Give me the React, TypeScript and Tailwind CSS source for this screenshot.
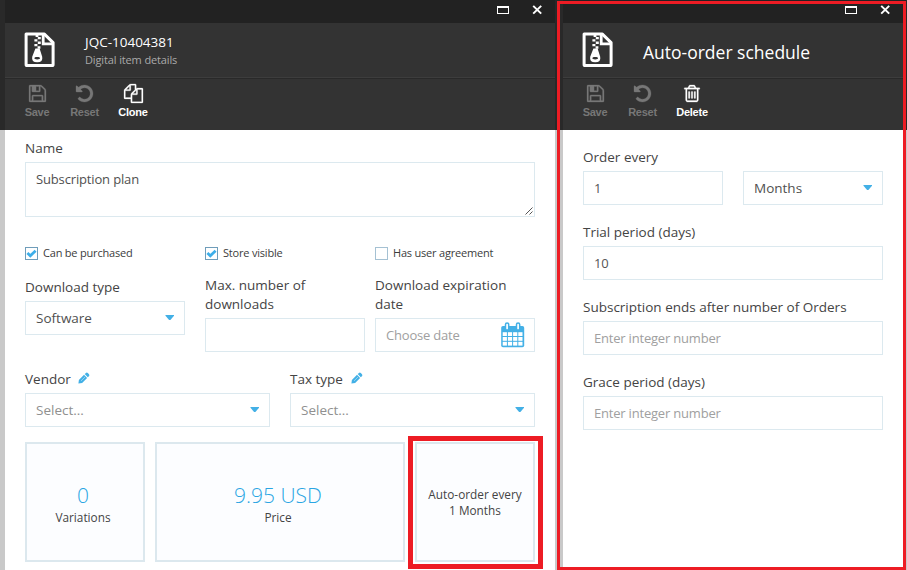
import type { ReactNode } from "react";

function ArchiveIcon() {
  return (
    <svg width="32" height="36" viewBox="0 0 32 36" className="-mt-px shrink-0">
      <path d="M2.1 2.1H20.4L29.1 10.6V32.4Q29.1 33.5 28 33.5H3.1Q2.1 33.5 2.1 32.4Z" fill="none" stroke="#fff" strokeWidth="3" strokeLinejoin="round" />
      <path d="M19.2 2V11.8H29" fill="none" stroke="#fff" strokeWidth="2.8" />
      <path d="M11.6 2.5h2.8v2.6h-2.8zM13.8 5h3v2.2h-3zM10.4 7.2h3v2.2h-3zM13.8 9.5h3v2.4h-3zM10.4 12h3v2.2h-3zM13.6 14.2h2.8v2.6h-2.8z" fill="#fff" />
      <path fillRule="evenodd" d="M11.4 16.5h4.2l2.6 8.2q1 5.6-5 5.6t-5-5.6ZM13.2 25c-1.9 0-2.8.6-2.8 1.2s.9 1.2 2.8 1.2 2.8-.6 2.8-1.2-.9-1.2-2.8-1.2Z" fill="#fff" />
    </svg>
  );
}

const glyphs = {
  save: {
    box: "0 128 1536 1536",
    size: "h-[17px] w-[17px]",
    d: "M384 1536h768v-384h-768v384zM1280 1536h128v-896q0-14-10-38.5t-20-34.5l-281-281q-10-10-34-20t-39-10v416q0 40-28 68t-68 28h-576q-40 0-68-28t-28-68v-416h-128v1280h128v-416q0-40 28-68t68-28h832q40 0 68 28t28 68v416zM896 608v-320q0-13-9.5-22.5t-22.5-9.5h-192q-13 0-22.5 9.5t-9.5 22.5v320q0 13 9.5 22.5t22.5 9.5h192q13 0 22.5-9.5t9.5-22.5zM1536 640v928q0 40-28 68t-68 28h-1344q-40 0-68-28t-28-68v-1344q0-40 28-68t68-28h928q40 0 88 20t76 48l280 280q28 28 48 76t20 88z",
  },
  reset: {
    box: "0 128 1536 1536",
    size: "h-[17px] w-[17px]",
    d: "M1536 896q0 156-61 298t-164 245-245 164-298 61q-172 0-327-72.5t-264-204.5q-7-10-6.5-22.5t8.5-20.5l137-138q10-9 25-9 16 2 23 12 73 95 179 147t225 52q104 0 198.5-40.5t163.5-109.5 109.5-163.5 40.5-198.5-40.5-198.5-109.5-163.5-163.5-109.5-198.5-40.5q-98 0-188 35.5t-160 101.5l137 138q31 30 14 69-17 40-59 40h-448q-26 0-45-19t-19-45v-448q0-42 40-59 39-17 69 14l130 129q107-101 244.5-156.5t284.5-55.5q156 0 298 61t245 164 164 245 61 298z",
  },
  clone: {
    box: "0 0 1792 1792",
    size: "h-[19px] w-[19px]",
    d: "M1696 384q40 0 68 28t28 68v1216q0 40-28 68t-68 28h-960q-40 0-68-28t-28-68v-288h-544q-40 0-68-28t-28-68v-672q0-40 20-88t48-76l408-408q28-28 76-48t88-20h416q40 0 68 28t28 68v328q68-40 128-40h416zm-544 213l-299 299h299v-299zm-640-384l-299 299h299v-299zm196 647l316-316v-416h-384v416q0 40-28 68t-68 28h-416v640h512v-256q0-40 20-88t48-76zm956 804v-1152h-384v416q0 40-28 68t-68 28h-416v640h896z",
  },
  trash: {
    box: "192 128 1408 1536",
    size: "h-[17px] w-[16px]",
    d: "M704 736v576q0 14-9 23t-23 9h-64q-14 0-23-9t-9-23v-576q0-14 9-23t23-9h64q14 0 23 9t9 23zm256 0v576q0 14-9 23t-23 9h-64q-14 0-23-9t-9-23v-576q0-14 9-23t23-9h64q14 0 23 9t9 23zm256 0v576q0 14-9 23t-23 9h-64q-14 0-23-9t-9-23v-576q0-14 9-23t23-9h64q14 0 23 9t9 23zm128 724v-948h-896v948q0 22 7 40.5t14.5 27 10.5 8.5h832q3 0 10.5-8.5t14.5-27 7-40.5zm-672-1076h448l-48-117q-7-9-17-11h-317q-10 2-17 11zm928 32v64q0 14-9 23t-23 9h-96v948q0 83-47 143.5t-113 60.5h-832q-66 0-113-58.5t-47-141.5v-952h-96q-14 0-23-9t-9-23v-64q0-14 9-23t23-9h309l70-167q15-37 54-63t79-26h320q40 0 79 26t54 63l70 167h309q14 0 23 9t9 23z",
  },
};

function Tool({ icon, label, active = false, width }: { icon: keyof typeof glyphs; label: string; active?: boolean; width: string }) {
  const g = glyphs[icon];
  return (
    <div className={`flex flex-col items-center ${width} ${active ? "text-white" : "text-[#777]"}`}>
      <div className="flex h-5 items-center justify-center">
        <svg viewBox={g.box} className={`overflow-visible ${g.size}`} fill="currentColor" stroke="currentColor" strokeWidth="25">
          <path d={g.d} />
        </svg>
      </div>
      <span className="mt-0.5 font-['Liberation_Sans',Arial,sans-serif] text-[11px] leading-[14px] font-bold tracking-[-0.25px]">{label}</span>
    </div>
  );
}

function TitleBar() {
  return (
    <div className="flex h-[23px] items-start justify-end gap-[23px] pt-[5px]">
      <div className="mt-px h-2 w-3 border border-t-2 border-white" />
      <svg width="10" height="10" viewBox="0 0 10 10">
        <path d="M1.2 0.9L9.2 8.6M9.2 0.9L1.2 8.6" stroke="#fff" strokeWidth="2" />
      </svg>
    </div>
  );
}

function Label({ children }: { children: ReactNode }) {
  return <div className="text-[13.5px] leading-[19px] text-[#444]">{children}</div>;
}

function Field({ value, hint }: { value?: string; hint?: string }) {
  return (
    <div className="flex h-[34px] items-center border border-[#dce9ef] pt-0.5 pl-2.5 text-[13px] tracking-[-0.2px]">
      {value ? <span className="text-[#555]">{value}</span> : <span className="text-[#a0a0a0]">{hint}</span>}
    </div>
  );
}

function Select({ value, hint }: { value?: string; hint?: string }) {
  return (
    <div className="flex h-[34px] items-center justify-between border border-[#dce9ef] pr-2.5 pl-2.5 text-[13.5px]">
      <span className={value ? "text-[#505050]" : "text-[#909090]"}>{value ?? hint}</span>
      <svg width="9" height="5" viewBox="0 0 9 5" className="-mt-px">
        <path d="M.5 0h8.5v.8L5.4 5H4.1L.5 .8z" fill="#43b0e6" />
      </svg>
    </div>
  );
}

function Check({ label, on = false }: { label: string; on?: boolean }) {
  return (
    <div className="flex items-start gap-[5px]">
      <div className={`flex size-[13px] items-center justify-center border ${on ? "border-[#6f9dba]" : "border-[#a5c1d3]"}`}>
        {on && (
          <svg width="11" height="11" viewBox="0 0 11 11">
            <path d="M1.4 4.9L4.3 7.7L9.6 2.8" fill="none" stroke="#3daee9" strokeWidth="2.8" />
          </svg>
        )}
      </div>
      <span className="-mt-px text-[11px] leading-[14px] tracking-[-0.2px] whitespace-nowrap text-[#3c3c3c]">{label}</span>
    </div>
  );
}

function Pencil() {
  return (
    <svg width="12" height="12" viewBox="0 0 12 12" className="mb-[3px]">
      <path d="M.4 11.6L.9 7.9L6 2.8L9.1 5.9L4.1 11ZM6.7 2.1L8 .9Q8.9.2 9.8 1L11 2.2Q11.7 3.1 11.1 4L9.8 5.2Z" fill="#43b0e6" />
      <path d="M3 8.9L7 5" stroke="#b9e2f7" strokeWidth=".7" />
    </svg>
  );
}

function Calendar() {
  const cells = [0, 1, 2, 3];
  return (
    <svg width="24" height="26" viewBox="0 0 24 26">
      <rect x="0.2" y="4" width="23" height="21.3" rx="1.8" fill="#43b0e6" />
      {[0, 1, 2].map((r) => cells.map((c) => <rect key={`${r}-${c}`} x={1.7 + c * 5.2} y={10.2 + r * 4.8} width="4.2" height="3.8" fill="#fff" />))}
      <rect x="4.5" y="1" width="3.2" height="7" rx="1.6" fill="#fff" stroke="#43b0e6" strokeWidth="1.5" />
      <rect x="15.5" y="1" width="3.2" height="7" rx="1.6" fill="#fff" stroke="#43b0e6" strokeWidth="1.5" />
    </svg>
  );
}

function Tile({ value, label, width }: { value: string; label: string; width: string }) {
  return (
    <div className={`flex h-[120px] flex-col items-center border-2 border-[#dce8ee] bg-[#fcfdff] pt-[39px] pr-1 ${width}`}>
      <div className="text-[21px] leading-6 font-light text-[#2aa5e3]">{value}</div>
      <div className="mt-0.5 text-[11.8px] leading-4 text-[#444]">{label}</div>
    </div>
  );
}

export default function App() {
  return (
    <div className="relative flex h-[570px] w-[907px] overflow-hidden bg-[#c9c9c9] bg-linear-to-b from-[#292929] from-[130px] to-[#c9c9c9] to-[130px] font-['Open_Sans','Noto_Sans',sans-serif]">
      <section className="ml-[5px] w-[550px] bg-white">
        <div className="h-[130px] bg-[#333]">
          <div className="bg-[#222] pr-[13px]"><TitleBar /></div>
          <div className="flex h-14 items-center gap-[29px] border-b border-[#292929] pl-[19px] shadow-[inset_0_-1px_0_#3d3d3d]">
            <ArchiveIcon />
            <div className="pt-px">
              <div className="text-[13.5px] leading-[17px] text-white">JQC-10404381</div>
              <div className="text-[11px] leading-[17px] tracking-[-0.13px] text-[#aaa]">Digital item details</div>
            </div>
          </div>
          <div className="flex gap-[13.5px] pt-1 pl-[15px]">
            <Tool icon="save" label="Save" width="w-[34px]" />
            <Tool icon="reset" label="Reset" width="w-[34px]" />
            <Tool icon="clone" label="Clone" width="w-9" active />
          </div>
        </div>

        <div className="px-5 pt-[9px]">
          <Label>Name</Label>
          <div className="relative mt-1 h-[55px] border border-[#dce9ef] pt-[7px] pl-2.5 text-[13px] leading-[18px] tracking-[-0.15px] text-[#505050]">
            Subscription plan
            <svg width="8" height="8" viewBox="0 0 8 8" className="absolute right-px bottom-px">
              <path d="M0.5 7.5L7.5 0.5M4.5 7.5L7.5 4.5" stroke="#555" strokeWidth="1" />
            </svg>
          </div>
          <div className="mt-[30px] grid h-[13px] grid-cols-[170px_160px_160px] gap-x-2.5">
            <Check label="Can be purchased" on />
            <Check label="Store visible" on />
            <Check label="Has user agreement" />
          </div>
          <div className="mt-4 flex h-[76px]">
            <div className="w-40 pt-0.5">
              <Label>Download type</Label>
              <div className="mt-1"><Select value="Software" /></div>
            </div>
            <div className="ml-5 w-40">
              <Label>Max. number of<br />downloads</Label>
              <div className="mt-1"><Field /></div>
            </div>
            <div className="ml-2.5 w-40">
              <Label>Download expiration<br />date</Label>
              <div className="mt-1 flex h-[34px] items-center justify-between border border-[#dce9ef] pr-[9px] pl-2.5">
                <span className="pt-0.5 text-[13px] tracking-[-0.2px] text-[#a0a0a0]">Choose date</span>
                <Calendar />
              </div>
            </div>
          </div>
          <div className="mt-[18px] grid grid-cols-2 gap-5">
            <div>
              <div className="flex items-center gap-[7px]"><Label>Vendor</Label><Pencil /></div>
              <div className="mt-1"><Select hint="Select..." /></div>
            </div>
            <div>
              <div className="flex items-center gap-2"><Label>Tax type</Label><Pencil /></div>
              <div className="mt-1"><Select hint="Select..." /></div>
            </div>
          </div>
          <div className="mt-[15px] flex gap-2.5">
            <Tile value="0" label="Variations" width="w-[120px]" />
            <Tile value="9.95 USD" label="Price" width="w-[250px]" />
            <div className="relative flex h-[120px] w-[120px] items-center justify-center border-2 border-[#dce8ee] bg-[#fcfdff] text-center text-[11.8px] leading-4 text-[#444]">
              <span>Auto-order every<br />1 Months</span>
              <div className="absolute -top-2 -right-2.5 -bottom-[9px] -left-[9px] border-5 border-[#ed1c24]" />
            </div>
          </div>
        </div>
      </section>

      <section className="ml-2 w-[343px]">
        <div className="h-[130px] bg-[#333]">
          <div className="bg-[#222] pr-4"><TitleBar /></div>
          <div className="flex h-14 items-center gap-[29px] border-b border-[#292929] pl-[19px] shadow-[inset_0_-1px_0_#3d3d3d]">
            <ArchiveIcon />
            <div className="pt-0.5 text-[17.5px] leading-6 text-white">Auto-order schedule</div>
          </div>
          <div className="flex gap-[13.5px] pt-1 pl-[15px]">
            <Tool icon="save" label="Save" width="w-[34px]" />
            <Tool icon="reset" label="Reset" width="w-[34px]" />
            <Tool icon="trash" label="Delete" width="w-[38px]" active />
          </div>
        </div>

        <div className="flex h-[440px] flex-col gap-[18px] bg-white pt-[18px] pr-[23px] pl-5">
          <div>
            <Label>Order every</Label>
            <div className="mt-1 grid grid-cols-2 gap-5">
              <Field value="1" />
              <Select value="Months" />
            </div>
          </div>
          <div>
            <Label>Trial period (days)</Label>
            <div className="mt-1"><Field value="10" /></div>
          </div>
          <div>
            <Label>Subscription ends after number of Orders</Label>
            <div className="mt-1"><Field hint="Enter integer number" /></div>
          </div>
          <div>
            <Label>Grace period (days)</Label>
            <div className="mt-1"><Field hint="Enter integer number" /></div>
          </div>
        </div>
      </section>

      <div className="pointer-events-none absolute top-px right-px bottom-0 left-[557px] border-3 border-[#ed1c24]" />
    </div>
  );
}
